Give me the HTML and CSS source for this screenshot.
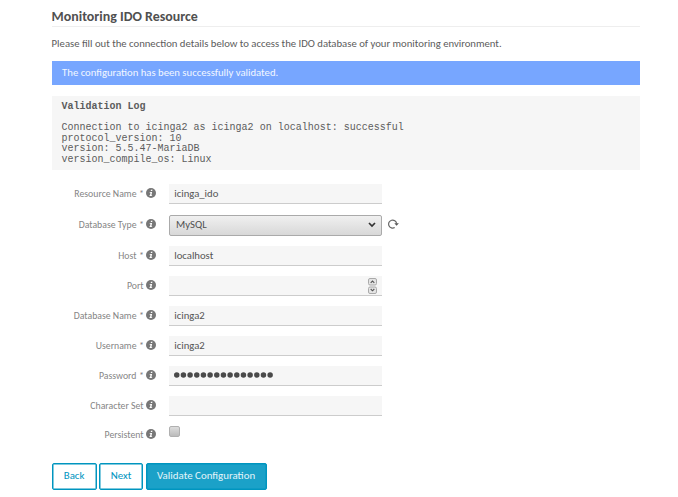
FILE: index.html
```html
<!DOCTYPE html>
<html lang="en">
<head>
<meta charset="utf-8">
<title>Monitoring IDO Resource</title>
<link rel="stylesheet" href="styles.css">
</head>
<body>
<svg width="0" height="0" class="defs">
  <symbol id="info" viewBox="0 0 10 10"><circle cx="5" cy="5" r="5" fill="#777"/><path d="M5 1.7h1.5L6.2 3H4.7zM3.8 3.9h2.3L5.4 7.2h.8L6 8H3.3l.2-.8h.5l.5-2.5h-.9z" fill="#fff"/></symbol>
</svg>
<main>
  <h1>Monitoring IDO Resource</h1>
  <p class="intro">Please fill out the connection details below to access the IDO database of your monitoring environment.</p>
  <div class="notice">The configuration has been successfully validated.</div>
  <pre class="log"><b>Validation Log</b>

Connection to icinga2 as icinga2 on localhost: successful
protocol_version: 10
version: 5.5.47-MariaDB
version_compile_os: Linux</pre>
  <form>
    <div class="row"><label>Resource Name <i>*</i></label><svg class="info"><use href="#info"/></svg><div class="field">icinga_ido</div></div>
    <div class="row type"><label>Database Type <i>*</i></label><svg class="info"><use href="#info"/></svg><div class="select">MySQL<svg width="8" height="6" viewBox="0 0 8 6"><path d="M1 1l3 3 3-3" fill="none" stroke="#333" stroke-width="1.7"/></svg></div><svg class="reload" width="11" height="10" viewBox="0 0 11 10"><path d="M6.7 8.5A4 4 0 1 1 8.6 4.5" fill="none" stroke="#666" stroke-width="1.2"/><path d="M6.3 4.2h4.6L8.6 6.7z" fill="#555"/></svg></div>
    <div class="row"><label>Host <i>*</i></label><svg class="info"><use href="#info"/></svg><div class="field">localhost</div></div>
    <div class="row"><label>Port</label><svg class="info"><use href="#info"/></svg><div class="field number"><svg width="9" height="16" viewBox="0 0 9 16"><g fill="#e4e4e4" stroke="#aaa"><rect x=".5" y=".5" width="8" height="6.5" rx="1.5"/><rect x=".5" y="9" width="8" height="6.5" rx="1.5"/></g><path d="M2.7 4.8l1.8-1.8 1.8 1.8M2.7 11l1.8 1.8L6.3 11" fill="none" stroke="#555" stroke-width="1.1"/></svg></div></div>
    <div class="row"><label>Database Name <i>*</i></label><svg class="info"><use href="#info"/></svg><div class="field">icinga2</div></div>
    <div class="row"><label>Username <i>*</i></label><svg class="info"><use href="#info"/></svg><div class="field">icinga2</div></div>
    <div class="row"><label>Password <i>*</i></label><svg class="info"><use href="#info"/></svg><div class="field password"><svg width="100" height="6"><path d="M2.75 3h94" stroke="#4a4a4a" stroke-width="5.5" stroke-linecap="round" stroke-dasharray="0 6.67"/></svg></div></div>
    <div class="row"><label>Character Set</label><svg class="info"><use href="#info"/></svg><div class="field"></div></div>
    <div class="row last"><label>Persistent</label><svg class="info"><use href="#info"/></svg><div class="check"></div></div>
  </form>
  <div class="buttons"><button class="back">Back</button><button class="next">Next</button><button class="primary">Validate Configuration</button></div>
</main>
</body>
</html>
```
FILE: styles.css
```css
* { box-sizing: border-box; }
body { margin: 0; background: #fff; color: #5c5c5c; font: 10.69px/16px Carlito, Lato, sans-serif; }
.defs { position: absolute; }
main { width: 588.5px; margin-left: 51.6px; }
h1 { margin: 0; height: 27px; padding-top: 8px; border-bottom: 1px solid #eee; font-size: 13.95px; line-height: 18px; color: #505050; }
.intro { margin: 9px 0 9.4px; height: 16px; white-space: nowrap; }
.notice { height: 24px; padding: 3px 10.5px; background: #77a6ff; color: #f2f7ff; line-height: 17px; }
.log { margin: 10.6px 0 0; height: 74px; padding: 5.6px 10px; background: #f6f6f6; color: #5c5c5c; font: 10px/10.67px "Liberation Mono", monospace; }
form { padding-top: 14px; }
.row { display: grid; grid-template-columns: 94px 10px 226.5px auto; height: 30px; align-items: start; }
.row.type { height: 31px; margin-top: 1px; }
label { padding-right: 2px; font-size: 9.78px; line-height: 20px; text-align: right; color: #858585; white-space: nowrap; }
.info { width: 10px; height: 10px; margin-top: 4px; }
.field, .select, .check { margin-left: 13.5px; }
.field { width: 213px; height: 20px; padding: 0 5.2px; background: #f6f6f6; border-bottom: 1px solid #ccc; line-height: 19px; color: #555; }
.select { display: flex; justify-content: space-between; align-items: center; width: 213px; height: 21px; padding: 0 5px 0 6px; border: 1px solid #aaa; border-radius: 2px; background: linear-gradient(#f0f0f0, #d8d8d8); color: #505050; }
.reload { margin: 4px 0 0 5.5px; }
.number { display: flex; justify-content: flex-end; align-items: flex-start; padding-top: 2px; }
.password { display: flex; align-items: center; }
.check { width: 11px; height: 11px; border: 1px solid #b0b0b0; border-radius: 2px; background: linear-gradient(#ddd, #bbb); }
.row.last { height: 37px; }
.row.last label { margin-top: -1px; }
.row.last .info { margin-top: 3px; }
.buttons { display: flex; gap: 2.5px; }
button { height: 27px; padding: 0; border: 1px solid #0095bf; border-radius: 2px; background: #fff; color: #0095bf; box-shadow: inset 0 0 0 .5px #0095bf; font: 10.9px/20px Carlito, Lato, sans-serif; white-space: nowrap; }
.back { width: 45px; }
.next { width: 44px; }
.primary { width: 121px; background: #1ba1c8; color: #e4f5fa; }
```
